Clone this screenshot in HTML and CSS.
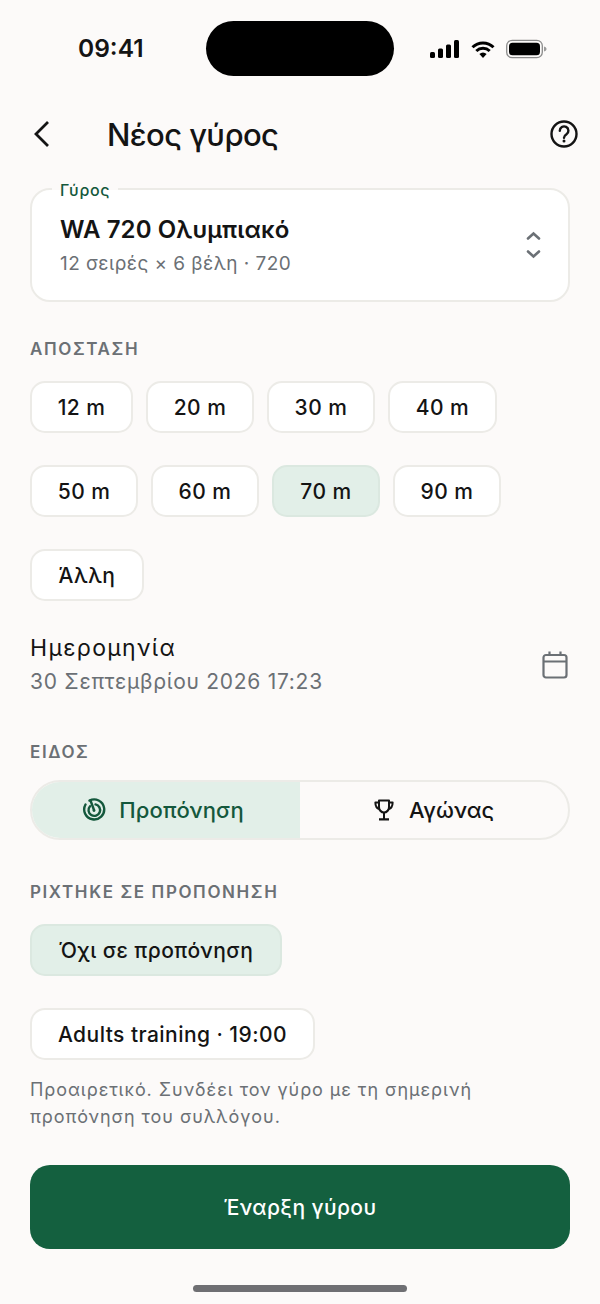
FILE: index.html
```html
<!DOCTYPE html>
<html lang="el">
<head>
    <meta charset="UTF-8">
    <meta name="viewport" content="width=device-width, initial-scale=1.0">
    <title>Νέος γύρος</title>
    <link rel="stylesheet" href="styles.css">
</head>
<body>
    <div class="screen">
        <div class="status-bar">
            <span class="time">09:41</span>
            <div class="island"></div>
            <div class="status-icons">
                <svg width="30" height="19" viewBox="0 0 30 19"><rect x="0" y="12" width="5" height="6" rx="1.5"/><rect x="8" y="8.500" width="5" height="9.500" rx="1.500"/><rect x="16" y="4.500" width="5" height="13.500" rx="1.500"/><rect x="24" y="0" width="5" height="18" rx="1.500"/></svg>
                <svg width="26" height="19" viewBox="0 0 26 19"><path d="M13 18l-3.600-3.900a5 5 0 0 1 7.200 0z"/><path d="M2.500 7.200a15 15 0 0 1 21 0M6.300 11a9.700 9.700 0 0 1 13.400 0" fill="none" stroke="#000" stroke-width="3"/></svg>
                <svg width="41" height="20" viewBox="0 0 41 20"><rect x="0.700" y="1.300" width="35.600" height="17.400" rx="5.500" fill="none" stroke="#8a8a8a" stroke-width="1.300"/><rect x="3" y="3.700" width="31" height="12.600" rx="3.500"/><path d="M38 7.500c1.800.4 2.500 1.300 2.500 2.500s-.7 2.100-2.500 2.500z" fill="#9a9a9a"/></svg>
            </div>
        </div>

        <header class="top-bar">
            <svg class="back" width="24" height="30" viewBox="0 0 24 30"><path d="M18 3L6 15l12 12" fill="none" stroke="#141414" stroke-width="2.800"/></svg>
            <h1>Νέος γύρος</h1>
            <svg class="help" width="30" height="30" viewBox="0 0 30 30" fill="none" stroke="#141414" stroke-width="2.400"><circle cx="15" cy="15" r="12.500"/><path d="M10.800 11.800a4.300 4.300 0 1 1 6.700 3.500c-1.500 1-2.500 1.700-2.500 3.400" stroke-linecap="round"/><circle cx="15" cy="22" r="1.500" fill="#141414" stroke="none"/></svg>
        </header>

        <main class="content">
            <div class="select-card">
                <span class="select-label">Γύρος</span>
                <div>
                    <div class="select-title">WA 720 Ολυμπιακό</div>
                    <div class="select-sub">12 σειρές × 6 βέλη · 720</div>
                </div>
                <svg width="16" height="30" viewBox="0 0 16 30" fill="none" stroke="#6b7075" stroke-width="2.600" stroke-linecap="round"><path d="M3 8.500L8.500 3.500l5.500 5M3 21.500L8.500 26.500l5.500-5"/></svg>
            </div>

            <div class="section-label label-distance">ΑΠΟΣΤΑΣΗ</div>
            <div class="chips">
                <div class="chip w103">12 m</div>
                <div class="chip w108">20 m</div>
                <div class="chip w108">30 m</div>
                <div class="chip w109">40 m</div>
            </div>
            <div class="chips">
                <div class="chip w108">50 m</div>
                <div class="chip w108">60 m</div>
                <div class="chip w108 selected">70 m</div>
                <div class="chip w108">90 m</div>
            </div>
            <div class="chips">
                <div class="chip w114">Άλλη</div>
            </div>

            <div class="date-row">
                <div>
                    <div class="date-title">Ημερομηνία</div>
                    <div class="date-value">30 Σεπτεμβρίου 2026 17:23</div>
                </div>
                <svg width="28" height="30" viewBox="0 0 28 30" fill="none" stroke="#6b7075" stroke-width="2.200"><rect x="2.500" y="5" width="23" height="22.500" rx="2.500"/><path d="M2.500 11.500h23M8.500 1.500v4M19.500 1.500v4"/></svg>
            </div>

            <div class="section-label label-kind">ΕΙΔΟΣ</div>
            <div class="segment">
                <div class="segment-item active">
                    <svg width="24" height="24" viewBox="0 0 24 24" fill="none" stroke="#14583c" stroke-width="2.400" stroke-linecap="round"><path d="M7.500 2.600A10 10 0 1 1 3.500 6.500"/><path d="M8 8.200a5.800 5.800 0 1 0 5.500-1.800"/><path d="M8.500 2.500L12 12"/><circle cx="12" cy="12.500" r="1.400" fill="#14583c" stroke="none"/></svg>
                    <span>Προπόνηση</span>
                </div>
                <div class="segment-item">
                    <svg width="20" height="22" viewBox="0 0 22 22" fill="none" stroke="#141414" stroke-width="2.200" stroke-linejoin="round" preserveAspectRatio="none"><path d="M5.500 1.500h11v6.500a5.500 5.500 0 0 1-11 0z"/><path d="M5.500 3.500H1.500c0 4 1.500 5.800 4.500 6.500M16.500 3.500h4c0 4-1.500 5.800-4.500 6.500M11 13.500v6M5.500 20.300h11"/></svg>
                    <span>Αγώνας</span>
                </div>
            </div>

            <div class="section-label label-session">ΡΙΧΤΗΚΕ ΣΕ ΠΡΟΠΟΝΗΣΗ</div>
            <div class="chips">
                <div class="chip w252 selected">Όχι σε προπόνηση</div>
            </div>
            <div class="chips">
                <div class="chip w285">Adults training · 19:00</div>
            </div>
            <p class="hint">Προαιρετικό. Συνδέει τον γύρο με τη σημερινή προπόνηση του συλλόγου.</p>

            <button class="start-btn">Έναρξη γύρου</button>
        </main>

        <div class="home-indicator"></div>
    </div>
</body>
</html>
```

FILE: styles.css
```css
/* Νέος γύρος screen */
* {
    box-sizing: border-box;
}

body {
    margin: 0;
    background-color: #fcfaf9;
    font-family: Inter, "Noto Sans", sans-serif;
    color: #141414;
}

.screen {
    width: 600px;
    height: 1304px;
    overflow: hidden;
}

.status-bar {
    height: 76px;
    padding: 21px 52px 0 78px;
    display: flex;
    align-items: flex-start;
}

.time {
    width: 128px;
    margin-top: 12px;
    font-size: 24.500px;
    font-weight: 600;
    line-height: 30px;
}

.island {
    width: 188px;
    height: 55px;
    border-radius: 28px;
    background-color: #000;
}

.status-icons {
    margin-left: 36px;
    margin-top: 18px;
    display: flex;
    align-items: center;
    gap: 10px;
}

.top-bar {
    height: 60px;
    margin-top: 28px;
    padding: 0 21px 0 30px;
    display: flex;
    align-items: center;
}

.back {
    flex-shrink: 0;
}

h1 {
    margin: 0 0 0 53px;
    flex: 1;
    font-size: 31px;
    font-weight: 500;
    letter-spacing: -0.600px;
}

.content {
    padding: 24px 30px 0;
}

.select-card {
    position: relative;
    height: 114px;
    padding: 0 27px 0 28px;
    display: flex;
    align-items: center;
    justify-content: space-between;
    background-color: #fff;
    border: 2px solid #ecebe7;
    border-radius: 20px;
}

.select-label {
    position: absolute;
    top: -9px;
    left: 20px;
    padding: 0 8px;
    background: linear-gradient(#fcfaf9 50%, #fff 50%);
    color: #14583c;
    font-size: 16px;
    font-weight: 500;
    line-height: 18px;
    letter-spacing: 0.700px;
}

.select-title {
    font-size: 24px;
    font-weight: 600;
    line-height: 32px;
    letter-spacing: 0.100px;
}

.select-sub {
    margin-top: 5px;
    color: #6b7075;
    font-size: 19px;
    line-height: 26px;
    letter-spacing: 0.450px;
}

.section-label {
    color: #6b7075;
    font-size: 17px;
    font-weight: 600;
    line-height: 20px;
    letter-spacing: 1.600px;
}

.label-distance {
    margin-top: 37px;
    margin-bottom: 22px;
}

.label-kind {
    margin-top: 44px;
    margin-bottom: 18px;
}

.label-session {
    margin-top: 42px;
    margin-bottom: 22px;
}

.chips {
    display: flex;
    gap: 13px;
    margin-bottom: 32px;
}

.chip {
    height: 52px;
    display: flex;
    align-items: center;
    justify-content: center;
    background-color: #fff;
    border: 2px solid #ecebe7;
    border-radius: 15px;
    font-size: 21px;
    font-weight: 500;
    letter-spacing: 0.450px;
}

.chip.selected {
    background-color: #e2efe8;
    border-color: #dbe8e0;
}

.w103 { width: 103px; }
.w108 { width: 108px; }
.w109 { width: 109px; }
.w114 { width: 114px; }
.w252 { width: 252px; }
.w285 { width: 285px; }

.date-row {
    display: flex;
    align-items: center;
    justify-content: space-between;
    margin-top: -1px;
    padding-right: 1px;
}

.date-title {
    font-size: 23px;
    line-height: 32px;
    letter-spacing: 1.300px;
}

.date-value {
    margin-top: 2px;
    color: #6b7075;
    font-size: 21px;
    line-height: 32px;
    letter-spacing: 0.720px;
}

.segment {
    height: 60px;
    display: flex;
    border: 2px solid #ecebe7;
    border-radius: 30px;
    overflow: hidden;
}

.segment-item {
    flex: 0 0 50%;
    display: flex;
    align-items: center;
    justify-content: center;
    gap: 15px;
    font-size: 22px;
    font-weight: 500;
}

.segment-item.active {
    padding-right: 6px;
    background-color: #e2efe8;
    color: #14583c;
    letter-spacing: 0.150px;
    gap: 13px;
}

.hint {
    margin: -16px 0 0;
    color: #6b7075;
    font-size: 18px;
    line-height: 27px;
    letter-spacing: 0.930px;
}

.start-btn {
    display: block;
    width: 100%;
    height: 84px;
    margin-top: 35px;
    background-color: #14603f;
    color: #fff;
    border: none;
    border-radius: 20px;
    font-family: inherit;
    font-size: 21px;
    font-weight: 500;
    letter-spacing: 0.400px;
}

.home-indicator {
    width: 214px;
    height: 7px;
    margin: 36px auto 0;
    border-radius: 4px;
    background-color: #6f6f73;
}
```
